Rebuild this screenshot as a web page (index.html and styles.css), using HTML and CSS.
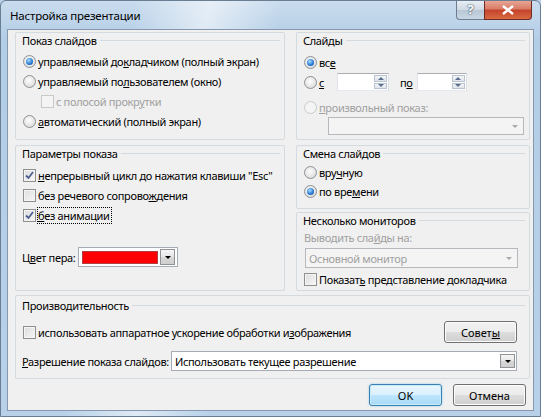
FILE: index.html
```html
<!DOCTYPE html>
<html lang="ru">
<head>
	<meta charset="UTF-8">
	<title>Настройка презентации</title>
	<link rel="stylesheet" href="styles.css">
</head>
<body>
	<div class="window">
		<div class="titlebar">
			<span class="title">Настройка презентации</span>
			<div class="caption">
				<span class="cap-help">?</span>
				<span class="cap-close">
					<svg width="14" height="10" viewBox="0 0 14 10"><path d="M2 1 L12 9 M12 1 L2 9" stroke="#fff" stroke-width="2.4"/></svg>
				</span>
			</div>
		</div>

		<div class="client">
			<div class="top">
				<!-- показ слайдов -->
				<div class="panel p-type">
					<div class="head"><span>Показ слайдов</span></div>
					<div class="list">
						<div class="row"><span class="radio on"></span><span>управляемый до<u>к</u>ладчиком (полный экран)</span></div>
						<div class="row"><span class="radio"></span><span>управляемый по<u>л</u>ьзователем (окно)</span></div>
						<div class="row sub off"><span class="check off"></span><span>с полосой прокр<u>у</u>тки</span></div>
						<div class="row"><span class="radio"></span><span><u>а</u>втоматический (полный экран)</span></div>
					</div>
				</div>

				<!-- слайды -->
				<div class="panel p-slides">
					<div class="head"><span>Слайды</span></div>
					<div class="list">
						<div class="row"><span class="radio on"></span><span>вс<u>е</u></span></div>
						<div class="row">
							<span class="radio"></span><span class="from"><u>с</u></span>
							<span class="spin w52"><span class="spin-btns"><i class="up"></i><i class="down"></i></span></span>
							<span class="to">п<u>о</u></span>
							<span class="spin w50"><span class="spin-btns"><i class="up"></i><i class="down"></i></span></span>
						</div>
						<div class="row off custom"><span class="radio off"></span><span><u>п</u>роизвольный показ:</span></div>
						<div class="combo off custom-combo"><span class="combo-text"></span><span class="drop"></span></div>
					</div>
				</div>

				<!-- параметры показа -->
				<div class="panel p-options">
					<div class="head"><span>Параметры показа</span></div>
					<div class="list">
						<div class="row"><span class="check on"><svg width="11" height="11" viewBox="0 0 11 11"><path d="M2 5.5 L4.5 8 L9 2" /></svg></span><span><u>н</u>епрерывный цикл до нажатия клавиши "Esc"</span></div>
						<div class="row"><span class="check"></span><span>без речевого сопрово<u>ж</u>дения</span></div>
						<div class="row"><span class="check on"><svg width="11" height="11" viewBox="0 0 11 11"><path d="M2 5.5 L4.5 8 L9 2" /></svg></span><span class="focus"><u>б</u>ез анимации</span></div>
					</div>
					<div class="pen">
						<span>Ц<u>в</u>ет пера:</span>
						<span class="pen-box"><span class="swatch"></span><span class="drop"></span></span>
					</div>
				</div>

				<div class="right-col">
					<!-- смена слайдов -->
					<div class="panel p-advance">
						<div class="head"><span>Смена слайдов</span></div>
						<div class="list">
							<div class="row"><span class="radio"></span><span>вру<u>ч</u>ную</span></div>
							<div class="row"><span class="radio on"></span><span>по вре<u>м</u>ени</span></div>
						</div>
					</div>

					<!-- несколько мониторов -->
					<div class="panel p-monitors">
						<div class="head"><span>Несколько мониторов</span></div>
						<div class="caption-row off">Выводить сла<u>й</u>ды на:</div>
						<div class="combo off monitor-combo"><span class="combo-text">Основной монитор</span><span class="drop"></span></div>
						<div class="row"><span class="check"></span><span>Показат<u>ь</u> представление докладчика</span></div>
					</div>
				</div>
			</div>

			<!-- производительность -->
			<div class="panel p-perf">
				<div class="head"><span>Производительность</span></div>
				<div class="perf-row">
					<span class="check"></span><span>использовать аппаратное ускорение обработки и<u>з</u>ображения</span>
					<button class="btn tips">Совет<u>ы</u></button>
				</div>
				<div class="res-row">
					<span><u>Р</u>азрешение показа слайдов:</span>
					<span class="combo res-combo"><span class="combo-text">Использовать текущее разрешение</span><span class="drop"></span></span>
				</div>
			</div>

			<div class="footer">
				<button class="btn default">OK</button>
				<button class="btn">Отмена</button>
			</div>
		</div>
	</div>
</body>
</html>
```

FILE: styles.css
```css
* {
	box-sizing: border-box;
}

body {
	margin: 0;
	font-family: "Noto Sans", "Open Sans", sans-serif;
	font-size: 11px;
	letter-spacing: -0.33px;
	color: #000;
	background: #b9d1ea;
}

u {
	text-decoration: underline;
	text-underline-offset: 1px;
}

/* окно */
.window {
	width: 541px;
	height: 417px;
	display: flex;
	flex-direction: column;
	border: 1px solid #6a7e93;
	border-radius: 6px 6px 0 0;
	background:
		linear-gradient(100deg, rgba(255,255,255,0) 22%, rgba(255,255,255,0.55) 34%, rgba(255,255,255,0) 46%),
		linear-gradient(#cadcee, #b2cde6 40px, #b8d1e9);
}

.titlebar {
	height: 28px;
	display: flex;
	align-items: flex-start;
}

.title {
	font-size: 11.5px;
	letter-spacing: -0.2px;
	padding: 7px 0 0 9px;
}

.caption {
	margin-left: auto;
	margin-right: 8px;
	display: flex;
}

.cap-help {
	width: 28px;
	height: 19px;
	border: 1px solid #6b7d90;
	border-top: none;
	border-right: none;
	border-radius: 0 0 0 4px;
	background: linear-gradient(#e8eef4, #cfdae4 50%, #b8c7d5 50%, #c9d7e4);
	color: #fff;
	font-weight: bold;
	font-size: 13px;
	line-height: 17px;
	text-align: center;
	text-shadow: 0 0 2px #33475c, 0 0 1px #33475c;
}

.cap-close {
	width: 48px;
	height: 19px;
	border: 1px solid #6d2a22;
	border-top: none;
	border-radius: 0 0 4px 0;
	background: linear-gradient(#e8a595, #d77b66 45%, #c4422b 50%, #d96a40);
	display: flex;
	align-items: center;
	justify-content: center;
}

.client {
	flex: 1;
	margin: 0 6px 5px 6px;
	background: #f0f0f0;
	border: 1px solid #8598ad;
	padding: 2px 3px 0 7px;
}

/* панели */
.top {
	display: grid;
	grid-template-columns: 270px 1fr;
	grid-template-rows: 108px 146px;
	column-gap: 11px;
	row-gap: 5px;
}

.right-col {
	display: flex;
	flex-direction: column;
	gap: 3px;
}

.panel {
	border: 1px solid #d3dbe1;
	border-radius: 2px;
	padding: 0 4px 0 6px;
}

.head {
	display: flex;
	align-items: center;
	height: 15px;
	line-height: 15px;
}

.head::after {
	content: "";
	flex: 1;
	border-top: 1px solid #d3dbe1;
	margin-left: 3px;
}

.row {
	display: flex;
	align-items: center;
	height: 20px;
	white-space: nowrap;
}

.off {
	color: #a0a0a0;
}

.p-type .list {
	margin-top: 3px;
}

.sub {
	padding-left: 18px;
}

/* радиокнопки и флажки */
.radio {
	width: 13px;
	height: 13px;
	margin: 0 2px 0 1px;
	border-radius: 50%;
	border: 1px solid #8d9196;
	background: radial-gradient(circle at 45% 40%, #fdfdfd, #e4e4e4 60%, #cdcdcd);
	display: inline-flex;
	align-items: center;
	justify-content: center;
	flex: none;
}

.radio.on::after {
	content: "";
	width: 7px;
	height: 7px;
	border-radius: 50%;
	background: radial-gradient(circle at 40% 35%, #a9ddff, #2d7fd6 55%, #123f84);
}

.radio.off {
	border-color: #c9cbcd;
	background: #f4f4f4;
}

.check {
	width: 13px;
	height: 13px;
	margin: 0 2px 0 1px;
	border: 1px solid #8e8f8f;
	background: linear-gradient(135deg, #dcdcdc, #f7f7f7);
	box-shadow: inset 0 0 0 1px #f4f4f4;
	display: inline-flex;
	align-items: center;
	justify-content: center;
	flex: none;
}

.check svg path {
	fill: none;
	stroke: #4a5f8e;
	stroke-width: 1.8;
}

.check.off {
	border-color: #cacaca;
	background: #f4f4f4;
	box-shadow: none;
}

.focus {
	outline: 1px dotted #000;
	outline-offset: 0;
	padding-right: 1px;
}

/* слайды */
.p-slides .list {
	margin-top: 4px;
}

.from {
	width: 18px;
	flex: none;
}

.to {
	margin: 0 4px 0 11px;
}

.spin {
	height: 18px;
	border: 1px solid #abadb3;
	border-color: #abadb3 #dbdfe6 #e3e9ef #e2e3ea;
	background: #fff;
	display: inline-flex;
	justify-content: flex-end;
	align-items: center;
	padding-right: 1px;
}

.w52 {
	width: 52px;
}

.w50 {
	width: 50px;
}

.spin-btns {
	width: 13px;
	height: 14px;
	display: flex;
	flex-direction: column;
	gap: 1px;
}

.spin-btns i {
	flex: 1;
	border: 1px solid #b9c3cf;
	background: linear-gradient(#f4f6f8, #dfe5ea);
	display: flex;
	align-items: center;
	justify-content: center;
}

.spin-btns i::after {
	content: "";
	border-left: 3px solid transparent;
	border-right: 3px solid transparent;
}

.spin-btns .up::after {
	border-bottom: 3px solid #5a6f8c;
}

.spin-btns .down::after {
	border-top: 3px solid #5a6f8c;
}

.custom {
	margin-top: 5px;
}

.combo {
	display: flex;
	align-items: center;
	height: 18px;
	border: 1px solid #a5acb5;
	background: #fff;
}

.combo-text {
	flex: 1;
	padding-left: 3px;
	white-space: nowrap;
}

.drop {
	width: 15px;
	height: 14px;
	margin-right: 1px;
	border: 1px solid #8f9398;
	background: linear-gradient(#f5f5f5, #e6e6e6 50%, #d8d8d8 50%, #cfcfcf);
	display: flex;
	align-items: center;
	justify-content: center;
	flex: none;
}

.drop::after {
	content: "";
	border-left: 3px solid transparent;
	border-right: 3px solid transparent;
	border-top: 3px solid #000;
}

.combo.off {
	background: #f4f4f4;
	border-color: #b5b9bd;
}

.combo.off .drop {
	border-color: transparent;
	background: none;
}

.combo.off .drop::after {
	border-top-color: #a8a8a8;
}

.custom-combo {
	margin-left: 25px;
	width: 196px;
}

/* параметры показа */
.p-options .list {
	margin-top: 4px;
}

.pen {
	display: flex;
	align-items: center;
	gap: 3px;
	margin-top: 22px;
}

.pen-box {
	width: 100px;
	height: 20px;
	border: 1px solid #a5acb5;
	background: #fff;
	display: flex;
	align-items: center;
	padding: 0 2px 0 3px;
}

.swatch {
	width: 76px;
	height: 13px;
	background: #ff0000;
	border: 1px solid #b04040;
}

.pen-box .drop {
	margin-left: auto;
	margin-right: 0;
	width: 15px;
	height: 16px;
}

/* смена слайдов */
.p-advance {
	height: 64px;
}

.p-advance .list {
	margin-top: 2px;
}

.p-advance .row {
	height: 19px;
}

/* мониторы */
.p-monitors {
	flex: 1;
}

.caption-row {
	margin: 2px 0 0 1px;
	height: 16px;
	line-height: 16px;
}

.monitor-combo {
	margin: 2px 0 0 2px;
	width: 213px;
	height: 20px;
}

.monitor-combo .combo-text {
	padding-left: 3px;
}

.p-monitors .row {
	height: 19px;
	margin-top: 2px;
}

/* производительность */
.p-perf {
	margin-top: 4px;
	height: 84px;
}

.p-perf .head {
	margin-top: 2px;
}

.perf-row {
	display: flex;
	align-items: center;
	height: 22px;
	margin-top: 8px;
	white-space: nowrap;
}

.tips {
	margin-left: auto;
	margin-right: 8px;
}

.res-row {
	display: flex;
	align-items: center;
	gap: 2px;
	margin-top: 8px;
	white-space: nowrap;
}

.res-combo {
	flex: 1;
	height: 20px;
	margin-right: 8px;
}

/* кнопки */
.btn {
	width: 73px;
	height: 22px;
	font: inherit;
	color: #000;
	border: 1px solid #707070;
	border-radius: 3px;
	background: linear-gradient(#f2f2f2, #ebebeb 50%, #dddddd 50%, #cfcfcf);
	box-shadow: inset 0 0 0 1px #fcfcfc;
	padding: 0;
}

.btn.default {
	border-color: #3c7fb1;
	background: linear-gradient(#eaf6fd, #d9f0fc 50%, #bee6fd 50%, #a7d9f5);
	box-shadow: inset 0 0 0 1px #c9ecfb, 0 0 2px #7ac4ee;
}

.footer {
	display: flex;
	justify-content: flex-end;
	gap: 11px;
	margin: 5px 4px 0 0;
}
```
